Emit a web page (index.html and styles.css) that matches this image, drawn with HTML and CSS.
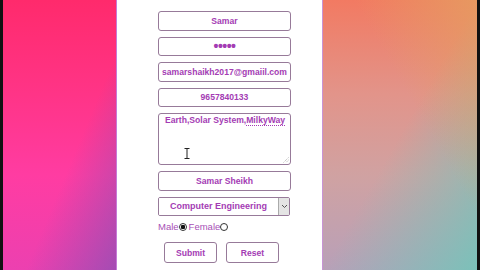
FILE: index.html
```html
<!DOCTYPE html>
<html lang="en">
<head>
  <meta charset="UTF-8" />
  <meta name="viewport" content="width=device-width, initial-scale=1.0" />
  <title>Registration Form</title>
  <link rel="stylesheet" href="styles.css">
</head>
<body>
  <div class="frame">
    <div class="side left"></div>
    <div class="panel">
      <form class="reg-form" onsubmit="return false">
        <input class="field" type="text" value="Samar" />
        <input class="field secret" type="password" value="12345" />
        <input class="field" type="text" value="samarshaikh2017@gmaiil.com" />
        <input class="field" type="text" value="9657840133" />
        <div class="textarea">
          Earth,Solar System,<span class="misspelt">MilkyWay</span>
          <svg class="ibeam" width="6" height="11" viewBox="0 0 6 11">
            <path d="M0.5 0.5h5M3 0.5v10M0.5 10.5h5" stroke="#222" stroke-width="1" fill="none"/>
          </svg>
          <svg class="grip" width="6" height="6" viewBox="0 0 6 6">
            <path d="M5.5 0.5L0.5 5.5M5.5 3L3 5.5" stroke="#999" stroke-width="0.8" stroke-dasharray="1 1"/>
          </svg>
        </div>
        <input class="field" type="text" value="Samar Sheikh" />
        <div class="select">
          <select>
            <option>Computer Engineering</option>
            <option>Civil Engineering</option>
            <option>Mechanical Engineering</option>
          </select>
          <span class="arrow">
            <svg width="7" height="5" viewBox="0 0 7 5"><path d="M1 1l2.5 2.5L6 1" stroke="#555" stroke-width="1" fill="none"/></svg>
          </span>
        </div>
        <div class="gender">
          <label>Male<input type="radio" name="gender" checked /></label>
          <label>Female<input type="radio" name="gender" /></label>
        </div>
        <div class="actions">
          <button type="submit">Submit</button>
          <button type="reset">Reset</button>
        </div>
      </form>
    </div>
    <div class="side right"></div>
  </div>
</body>
</html>
```

FILE: styles.css
```css
body {
  margin: 0;
  background: #111;
  font-family: "Liberation Sans", Arial, sans-serif;
}
.frame {
  display: flex;
  height: 270px;
  margin: 0 3px;
  overflow: hidden;
}
.side {
  height: 100%;
}
.side.left {
  width: 113px;
  background:
    linear-gradient(to bottom right, rgba(140, 80, 180, 0) 60%, rgba(140, 80, 180, 0.75) 100%),
    linear-gradient(to bottom, #ff2a6c 0%, #ff3487 35%, #ff3ca2 65%, #ec40b0 100%);
}
.side.right {
  flex: 1;
  background:
    linear-gradient(to bottom left, rgba(228, 160, 96, 0.8) 0%, rgba(228, 160, 96, 0) 40%),
    linear-gradient(to bottom right, rgba(120, 195, 185, 0) 50%, rgba(120, 195, 185, 0.95) 100%),
    linear-gradient(to bottom, #f27a62 0%, #e2948a 35%, #d0a2a2 65%, #b8a0b8 100%);
}
.panel {
  width: 207px;
  background: #fff;
  border-left: 1px solid #c57ad6;
  border-right: 1px solid #c894d6;
  box-sizing: border-box;
  padding: 11px 0 0 41px;
}
.reg-form {
  display: flex;
  flex-direction: column;
  align-items: flex-start;
  gap: 6px;
  width: 133px;
}
.field, .textarea, .select, button {
  box-sizing: border-box;
  border: 1px solid #977a99;
  border-radius: 3px;
  background: #fff;
  color: #a43cb4;
  font-family: "Liberation Sans", Arial, sans-serif;
  font-weight: bold;
  font-size: 8.6px;
}
.field {
  width: 133px;
  height: 19.5px;
  padding: 0 2px;
  text-align: center;
  outline: none;
}
.field.secret {
  font-size: 14px;
  letter-spacing: -0.5px;
}
.textarea {
  position: relative;
  width: 133px;
  height: 52px;
  padding: 1px 0 0 6px;
  line-height: 10px;
  text-align: left;
}
.misspelt {
  text-decoration: underline dotted #a43cb4;
  text-underline-offset: 2px;
}
.ibeam {
  position: absolute;
  left: 25px;
  top: 34px;
}
.grip {
  position: absolute;
  right: 1px;
  bottom: 1px;
}
.select {
  display: flex;
  width: 132px;
  height: 19.5px;
  border-radius: 2px;
  overflow: hidden;
}
.select select {
  flex: 1;
  appearance: none;
  border: none;
  background: #fff;
  color: #a43cb4;
  font: inherit;
  font-size: 9px;
  text-align: center;
  outline: none;
  padding: 0;
}
.arrow {
  width: 10px;
  display: flex;
  align-items: center;
  justify-content: center;
  background: #e4e4e4;
  border-left: 1px solid #aaa;
}
.gender {
  display: flex;
  font-size: 9.5px;
  color: #a850b6;
  line-height: 11px;
  margin-top: -1px;
}
.gender label {
  display: flex;
  align-items: center;
}
.gender input {
  appearance: none;
  width: 8px;
  height: 8px;
  margin: 0 2px 0 0;
  border: 1px solid #333;
  border-radius: 50%;
  background: #fff;
}
.gender input:checked {
  background: radial-gradient(circle, #111 0 2px, #fff 2.5px);
}
.actions {
  display: flex;
  gap: 9px;
  margin: 4px 0 0 6px;
}
button {
  width: 53px;
  height: 21px;
  padding: 0;
  cursor: pointer;
}
```
